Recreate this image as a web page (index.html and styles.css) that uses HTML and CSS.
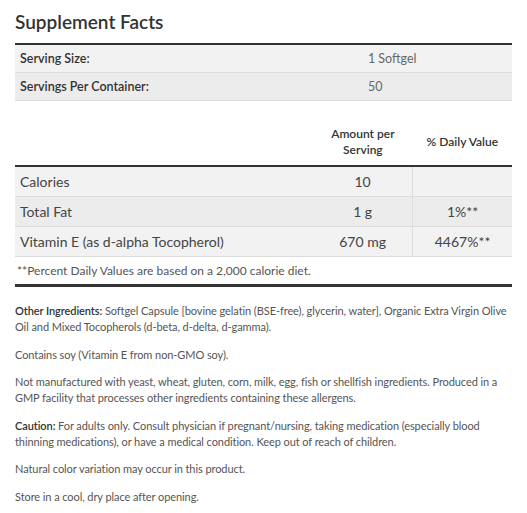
FILE: index.html
```html
<!DOCTYPE html>
<html lang="en">
<head>
<meta charset="utf-8">
<title>Supplement Facts</title>
<link rel="stylesheet" href="styles.css">
</head>
<body>
<div class="facts">
  <h1 class="title">Supplement Facts</h1>
  <table class="serving">
    <tr class="row-a"><th class="label">Serving Size:</th><td class="val">1 Softgel</td></tr>
    <tr class="row-b"><th class="label">Servings Per Container:</th><td class="val">50</td></tr>
  </table>
  <table class="nutrients">
    <thead>
      <tr><th class="h-name"></th><th class="h-amt">Amount per<br>Serving</th><th class="h-dv">% Daily Value</th></tr>
    </thead>
    <tbody>
      <tr class="row-a"><td class="name">Calories</td><td class="amt">10</td><td class="dv"></td></tr>
      <tr class="row-b"><td class="name">Total Fat</td><td class="amt">1 g</td><td class="dv">1%**</td></tr>
      <tr class="row-a"><td class="name">Vitamin E (as d-alpha Tocopherol)</td><td class="amt">670 mg</td><td class="dv">4467%**</td></tr>
    </tbody>
  </table>
  <p class="footnote">**Percent Daily Values are based on a 2,000 calorie diet.</p>
  <div class="notes">
    <p><strong>Other Ingredients:</strong> Softgel Capsule [bovine gelatin (BSE-free), glycerin, water], Organic Extra Virgin Olive Oil and Mixed Tocopherols (d-beta, d-delta, d-gamma).</p>
    <p>Contains soy (Vitamin E from non-GMO soy).</p>
    <p>Not manufactured with yeast, wheat, gluten, corn, milk, egg, fish or shellfish ingredients. Produced in a GMP facility that processes other ingredients containing these allergens.</p>
    <p><strong>Caution:</strong> For adults only. Consult physician if pregnant/nursing, taking medication (especially blood thinning medications), or have a medical condition. Keep out of reach of children.</p>
    <p>Natural color variation may occur in this product.</p>
    <p>Store in a cool, dry place after opening.</p>
  </div>
</div>
</body>
</html>
```

FILE: styles.css
```css
html, body {
  margin: 0;
  padding: 0;
  background: #fff;
}
body {
  font-family: "Lato", "Noto Sans", sans-serif;
  color: #555;
}
.facts {
  padding: 0 15px;
}
.title {
  margin: 0 0 9px;
  padding-top: 10px;
  font-size: 19px;
  line-height: 24px;
  font-weight: 600;
  color: #333;
}
table {
  width: 100%;
  border-collapse: collapse;
}
.serving {
  border-top: 2px solid #333;
}
.serving tr {
  border-bottom: 1px solid #ddd;
}
.serving th, .serving td {
  height: 27px;
  padding: 0 5px;
  font-size: 12.5px;
  text-align: left;
}
.serving .label {
  width: 70%;
  font-weight: 600;
  color: #333;
}
.serving .val {
  font-weight: 400;
  color: #666;
}
.row-a { background: #f2f2f2; }
.row-b { background: #ececec; }
.nutrients {
  margin-top: 25px;
}
.nutrients thead tr {
  border-bottom: 2px solid #333;
}
.nutrients thead th {
  padding: 0 0 7px;
  font-size: 12px;
  line-height: 16px;
  font-weight: 600;
  color: #333;
  text-align: center;
  vertical-align: middle;
}
.nutrients .h-name { width: 60%; }
.nutrients .h-amt { width: 20%; }
.nutrients tbody tr {
  border-bottom: 1px solid #ddd;
}
.nutrients tbody td {
  height: 29px;
  padding: 0 5px;
  font-size: 14px;
  color: #444;
}
.nutrients .amt, .nutrients .dv {
  text-align: center;
}
.nutrients .dv {
  border-left: 1px solid #ddd;
}
.footnote {
  margin: 0;
  padding: 0 2px;
  height: 27px;
  line-height: 27px;
  font-size: 12px;
  color: #555;
  border-bottom: 3px solid #333;
}
.notes {
  padding-top: 16px;
  font-size: 11px;
  line-height: 16px;
  letter-spacing: -0.08px;
  color: #555;
}
.notes p {
  margin: 0 0 11.5px;
}
.notes strong {
  font-weight: 600;
  color: #333;
}
```
